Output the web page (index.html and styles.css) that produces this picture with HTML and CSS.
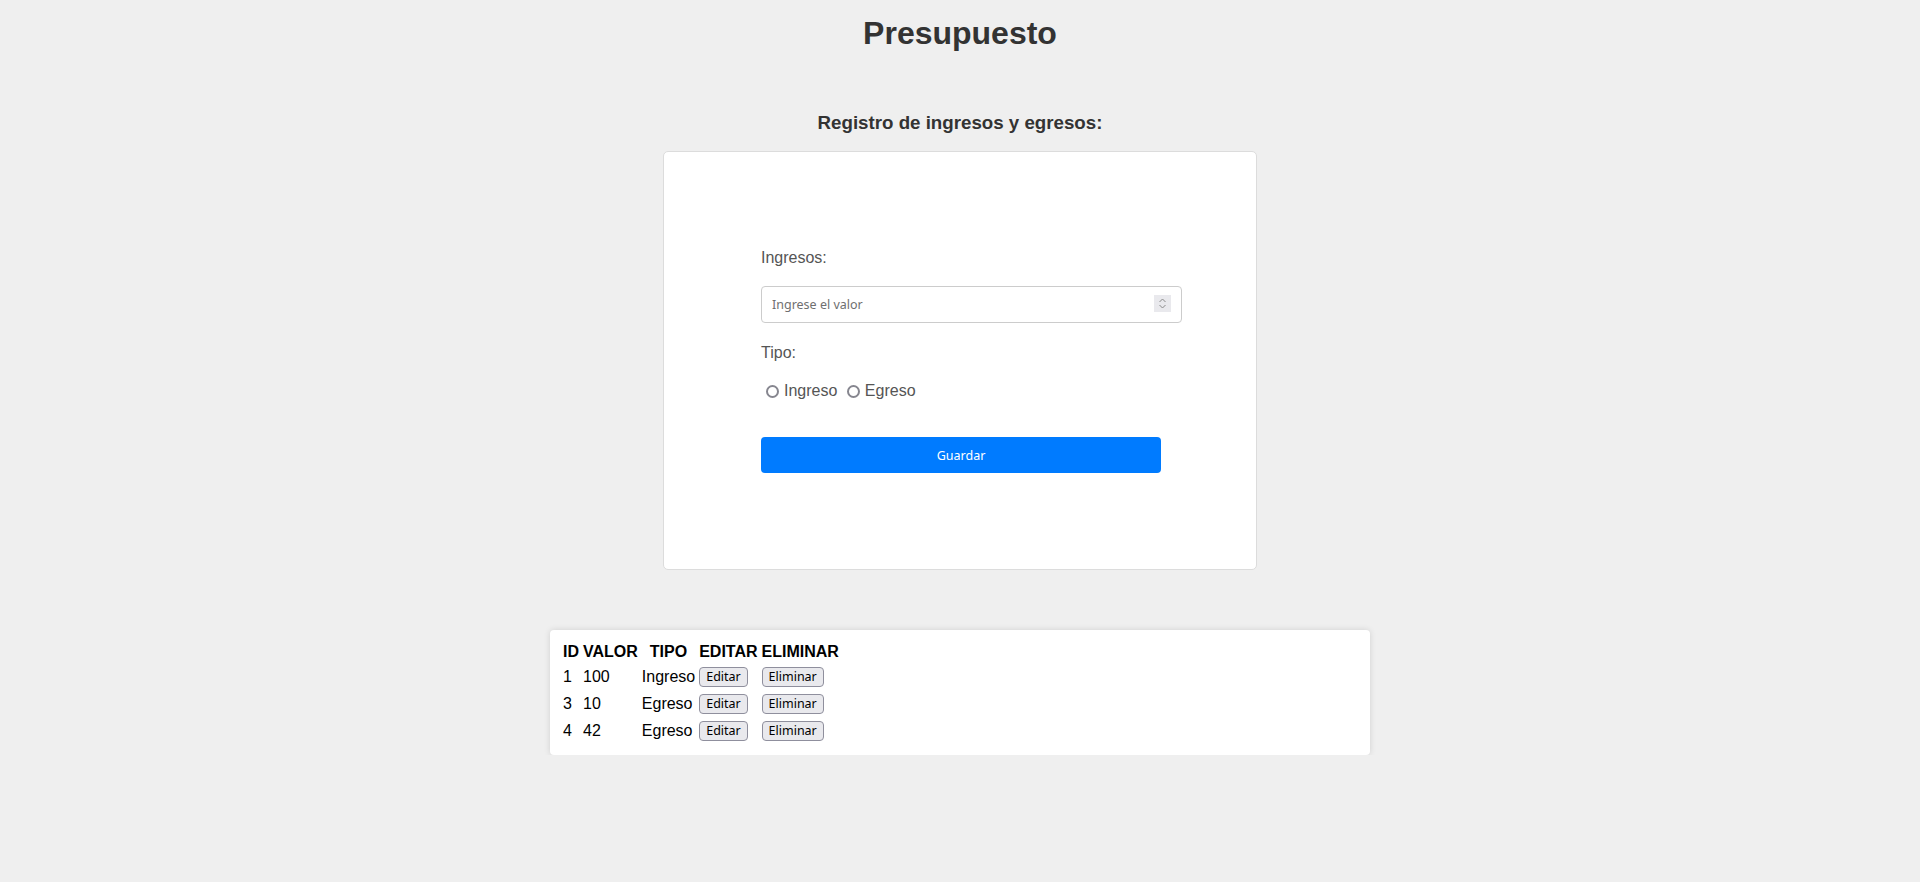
FILE: index.html
```html
<!DOCTYPE html>
<html lang="es">
<head>
<meta charset="utf-8">
<title>Presupuesto</title>
<link rel="stylesheet" href="styles.css">
</head>
<body>
  <h1 class="title">Presupuesto</h1>
  <h3 class="subtitle">Registro de ingresos y egresos:</h3>
  <div class="form-card">
    <form class="form">
      <label class="field-label" for="valor">Ingresos:</label>
      <div class="input-wrap">
        <input class="field-input" id="valor" type="number" placeholder="Ingrese el valor">
        <span class="spin" aria-hidden="true"><svg width="17" height="17" viewBox="0 0 17 17"><path d="M5.5 7 L8.5 4 L11.5 7 M5.5 10 L8.5 13 L11.5 10" fill="none" stroke="#8a8a8a" stroke-width="1"/></svg></span>
      </div>
      <label class="field-label tipo-label">Tipo:</label>
      <div class="radio-row"><input type="radio" name="tipo" id="ing"><label for="ing">Ingreso</label> <input type="radio" name="tipo" id="egr"><label for="egr">Egreso</label></div>
      <button type="button" class="save-btn">Guardar</button>
    </form>
  </div>
  <div class="table-card">
    <table class="list">
      <thead>
        <tr><th>ID</th><th>VALOR</th><th>TIPO</th><th>EDITAR</th><th>ELIMINAR</th></tr>
      </thead>
      <tbody>
        <tr><td>1</td><td>100</td><td>Ingreso</td><td><button class="row-btn">Editar</button></td><td><button class="row-btn">Eliminar</button></td></tr>
        <tr><td>3</td><td>10</td><td>Egreso</td><td><button class="row-btn">Editar</button></td><td><button class="row-btn">Eliminar</button></td></tr>
        <tr><td>4</td><td>42</td><td>Egreso</td><td><button class="row-btn">Editar</button></td><td><button class="row-btn">Eliminar</button></td></tr>
      </tbody>
    </table>
  </div>
</body>
</html>
```

FILE: styles.css
```css
html, body {
  margin: 0;
  padding: 0;
}
body {
  background: #efefef;
  font-family: "Liberation Sans", Arial, sans-serif;
  color: #333;
}
.title {
  margin: 15px 0 0;
  font-size: 32px;
  font-weight: bold;
  text-align: center;
  color: #333;
}
.subtitle {
  margin: 60px 0 17px;
  font-size: 18.72px;
  font-weight: bold;
  text-align: center;
  color: #333;
}
.form-card {
  box-sizing: border-box;
  width: 594px;
  margin: 0 auto;
  background: #fff;
  border: 1px solid #dcdcdc;
  border-radius: 5px;
  padding: 97px 0 96px 97px;
}
.form {
  display: flex;
  flex-direction: column;
  align-items: flex-start;
  margin: 0;
}
.field-label {
  display: block;
  font-size: 16px;
  color: #555;
}
.input-wrap {
  position: relative;
  margin-top: 19px;
}
.field-input {
  display: block;
  box-sizing: border-box;
  width: 421px;
  height: 37px;
  padding: 0 10px;
  border: 1px solid #ccc;
  border-radius: 4px;
  font-family: "Noto Sans", sans-serif;
  font-size: 12.5px;
  color: #333;
  background: #fff;
  outline: none;
  -moz-appearance: textfield;
}
.field-input::placeholder {
  color: #6f6f6f;
}
.field-input::-webkit-inner-spin-button,
.field-input::-webkit-outer-spin-button {
  -webkit-appearance: none;
  margin: 0;
}
.spin {
  position: absolute;
  top: 9px;
  right: 11px;
  width: 17px;
  height: 17px;
  background: #e9e9ed;
  display: block;
}
.spin svg {
  display: block;
}
.tipo-label {
  margin-top: 21px;
}
.radio-row {
  margin-top: 20px;
  font-size: 16px;
  color: #555;
}
.radio-row input {
  -webkit-appearance: none;
  appearance: none;
  box-sizing: border-box;
  width: 13px;
  height: 13px;
  margin: 0 5px 0 5px;
  border: 2px solid #86868f;
  border-radius: 50%;
  background: #fff;
  vertical-align: -2px;
}
.save-btn {
  margin-top: 37px;
  width: 400px;
  height: 36px;
  border: none;
  border-radius: 4px;
  background: #007bff;
  color: #fff;
  font-family: "Noto Sans", sans-serif;
  font-size: 12.5px;
  padding: 0;
}
.table-card {
  box-sizing: border-box;
  width: 820px;
  margin: 60px auto 0;
  padding: 10px;
  background: #fff;
  border-radius: 4px;
  box-shadow: 0 0 6px rgba(0, 0, 0, 0.13);
}
.list {
  font-size: 16px;
  color: #000;
}
.list th {
  font-weight: bold;
}
.list td {
  height: 23px;
}
.row-btn {
  font-family: "Noto Sans", sans-serif;
  font-size: 12.5px;
  color: #000;
  background: #e9e9ed;
  border: 1px solid #8f8f9d;
  border-radius: 4px;
  padding: 1px 6px;
  line-height: 16px;
}
```
